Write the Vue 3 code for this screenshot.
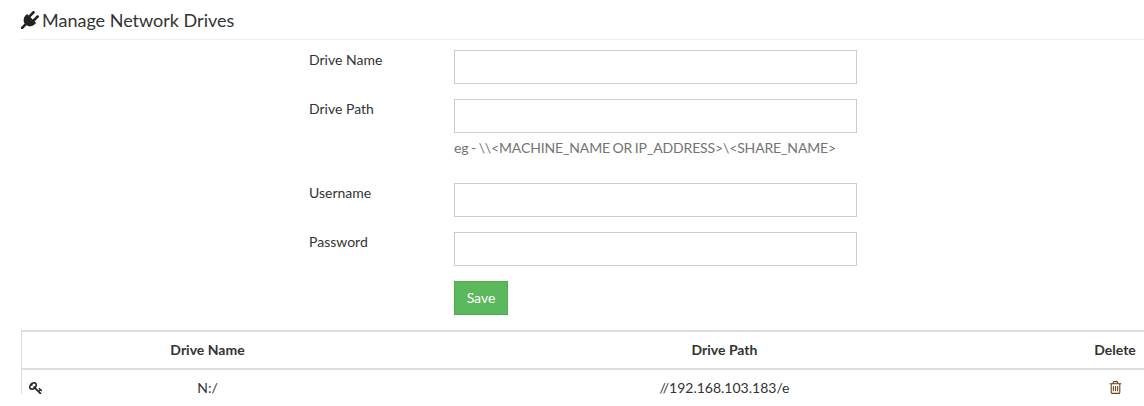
<script setup>
const fields = [
	{ label: "Drive Name", help: "" },
	{ label: "Drive Path", help: "eg - \\\\<MACHINE_NAME OR IP_ADDRESS>\\<SHARE_NAME>" },
	{ label: "Username", help: "" },
	{ label: "Password", help: "" },
];

const drives = [{ name: "N:/", path: "//192.168.103.183/e" }];

const plug = "M1755 453q37 38 37 90.5t-37 90.5l-401 400 150 150-160 160q-163 163-389.5 186.5t-411.5-100.5l-362 362h-181v-181l362-362q-124-185-100.5-411.5t186.5-389.5l160-160 150 150 400-401q38-37 91-37t90 37 37 90.5-37 90.5l-400 401 234 234 401-400q38-37 91-37t90 37z";
const key = "M832 512q0-80-56-136t-136-56-136 56-56 136q0 42 19 83-41-19-83-19-80 0-136 56t-56 136 56 136 136 56 136-56 56-136q0-42-19-83 41 19 83 19 80 0 136-56t56-136zm851 704q0 17-49 66t-66 49q-9 0-28.5-16t-36.5-33-38.5-40-24.5-26l-96 96 220 220q28 28 28 68 0 42-39 81t-81 39q-40 0-68-28l-671-671q-176 131-365 131-163 0-265.5-102.5t-102.5-265.5q0-160 95-313t248-248 313-95q163 0 265.5 102.5t102.5 265.5q0 189-131 365l355 355 96-96q-3-3-26-24.5t-40-38.5-33-36.5-16-28.5q0-17 49-66t66-49q13 0 23 10 6 6 46 44.5t82 79.5 86.5 86 73 78 28.5 41z";
const trash = "M704 736v576q0 14-9 23t-23 9h-64q-14 0-23-9t-9-23v-576q0-14 9-23t23-9h64q14 0 23 9t9 23zm256 0v576q0 14-9 23t-23 9h-64q-14 0-23-9t-9-23v-576q0-14 9-23t23-9h64q14 0 23 9t9 23zm256 0v576q0 14-9 23t-23 9h-64q-14 0-23-9t-9-23v-576q0-14 9-23t23-9h64q14 0 23 9t9 23zm128 724v-948h-896v948q0 22 7 40.5t14.5 27 10.5 8.5h832q3 0 10.5-8.5t14.5-27 7-40.5zm-672-1076h448l-48-117q-7-9-17-11h-317q-10 2-17 11zm928 32v64q0 14-9 23t-23 9h-96v948q0 83-47 143.5t-113 60.5h-832q-66 0-113-58.5t-47-141.5v-952h-96q-14 0-23-9t-9-23v-64q0-14 9-23t23-9h309l70-167q15-37 54-63t79-26h320q40 0 79 26t54 63l70 167h309q14 0 23 9t9 23z";
</script>

<template>
	<div class="page">
		<div class="page-header">
			<svg class="plug-icon" viewBox="0 0 1792 1792"><path :d="plug" /></svg>
			<span>Manage Network Drives</span>
		</div>

		<form class="drive-form" @submit.prevent>
			<div v-for="field in fields" :key="field.label" class="form-row">
				<label>{{ field.label }}</label>
				<div class="field">
					<input type="text" />
					<p v-if="field.help" class="help">{{ field.help }}</p>
				</div>
			</div>
			<div class="form-row">
				<span></span>
				<div class="field">
					<button type="submit">Save</button>
				</div>
			</div>
		</form>

		<table class="drive-table">
			<colgroup>
				<col class="col-key" />
				<col class="col-name" />
				<col class="col-path" />
				<col class="col-delete" />
			</colgroup>
			<thead>
				<tr>
					<th></th>
					<th>Drive Name</th>
					<th>Drive Path</th>
					<th class="delete-cell">Delete</th>
				</tr>
			</thead>
			<tbody>
				<tr v-for="drive in drives" :key="drive.name">
					<td class="key-cell">
						<svg class="row-icon" viewBox="0 0 1792 1792"><path :d="key" /></svg>
					</td>
					<td>{{ drive.name }}</td>
					<td>{{ drive.path }}</td>
					<td class="delete-cell">
						<svg class="row-icon trash" viewBox="0 0 1792 1792"><path :d="trash" /></svg>
					</td>
				</tr>
			</tbody>
		</table>
	</div>
</template>

<style>
html,
body {
	background: #fff;
}
</style>

<style scoped>
.page {
	width: 1144px;
	height: 394px;
	overflow: hidden;
	box-sizing: border-box;
	padding-left: 21px;
	font-family: Lato, "Liberation Sans", sans-serif;
	font-size: 14px;
	line-height: 20px;
	color: #333;
}

.page-header {
	display: flex;
	align-items: center;
	gap: 3px;
	height: 40px;
	padding-top: 1px;
	box-sizing: border-box;
	border-bottom: 1px solid #eee;
	font-size: 18px;
	color: #333;
}

.plug-icon {
	width: 18px;
	height: 18px;
	fill: #222;
}

.drive-form {
	padding: 10px 0 0 288px;
}

.form-row {
	display: grid;
	grid-template-columns: 145px 403px;
	margin-bottom: 15px;
}

.form-row label {
	display: block;
}

.form-row input {
	display: block;
	width: 100%;
	height: 34px;
	box-sizing: border-box;
	border: 1px solid #ccc;
	background: #fff;
	padding: 6px 12px;
}

.help {
	margin: 5px 0 10px;
	color: #737373;
	letter-spacing: -0.14px;
	word-spacing: -0.85px;
}

.form-row button {
	display: block;
	width: 54px;
	height: 34px;
	padding: 6px 0;
	border: 1px solid #4cae4c;
	background: #5cb85c;
	color: #fff;
	font-family: inherit;
	font-size: 14px;
	line-height: 20px;
}

.drive-table {
	width: 1125px;
	table-layout: fixed;
	border-collapse: collapse;
	border-top: 2px solid #ddd;
	border-left: 1px solid #ddd;
}

.col-key {
	width: 29px;
}

.col-name {
	width: 314px;
}

.col-path {
	width: 720px;
}

.col-delete {
	width: 62px;
}

.drive-table th,
.drive-table td {
	padding: 8px;
	text-align: center;
}

.drive-table th {
	border-bottom: 2px solid #ddd;
	font-weight: 700;
}

.drive-table .key-cell {
	padding-left: 7px;
	padding-right: 0;
	text-align: left;
}

.drive-table .delete-cell {
	padding-right: 9px;
}

.row-icon {
	display: inline-block;
	width: 14px;
	height: 14px;
	fill: #222;
	vertical-align: -2px;
}

.trash {
	width: 15px;
	height: 15px;
	fill: #6b3f18;
}
</style>
